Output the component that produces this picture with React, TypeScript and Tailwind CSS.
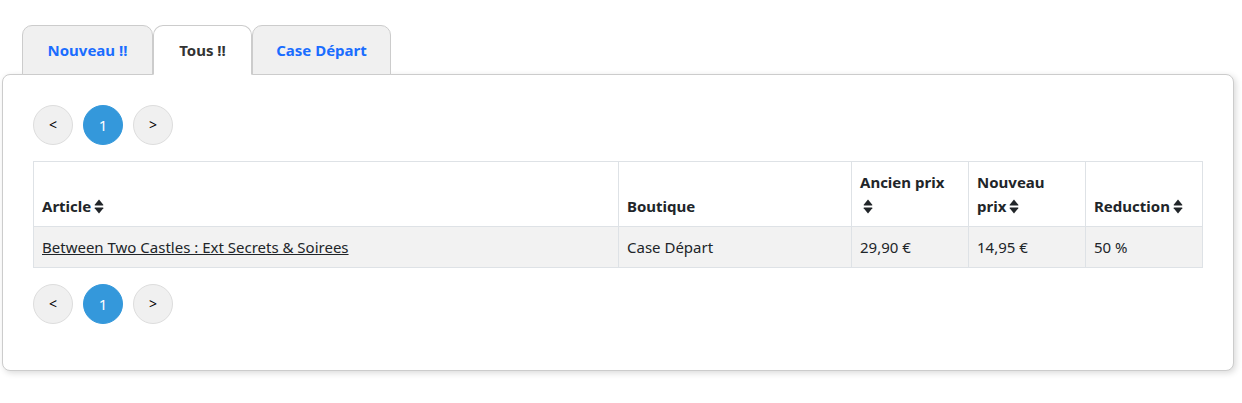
import React from "react";

function SortIcon() {
  return (
    <svg width="10" height="15" viewBox="0 0 10 16" className="inline-block align-[-2px] ml-[3px]" fill="#212529">
      <path d="M5 0.5 L9.6 6.2 Q10 7 9 7 L1 7 Q0 7 0.4 6.2 Z" />
      <path d="M5 15.5 L9.6 9.8 Q10 9 9 9 L1 9 Q0 9 0.4 9.8 Z" />
    </svg>
  );
}

function Pagination() {
  return (
    <div className="flex gap-[10px]">
      <button className="w-10 h-10 rounded-full bg-[#f0f0f0] border border-[#dddddd] text-[14px] text-black flex items-center justify-center">&lt;</button>
      <button className="w-10 h-10 rounded-full bg-[#3498db] border border-[#3498db] text-[15px] text-white flex items-center justify-center">1</button>
      <button className="w-10 h-10 rounded-full bg-[#f0f0f0] border border-[#dddddd] text-[14px] text-black flex items-center justify-center">&gt;</button>
    </div>
  );
}

export default function App() {
  const font = { fontFamily: '"Noto Sans", "Open Sans", sans-serif' };
  return (
    <div className="bg-white min-h-[403px] pt-[25px] pl-[2px] pr-[8px] text-[#212529] text-[16px] leading-[24px]" style={font}>
      <div className="flex pl-[20px] relative z-10 -mb-px">
        <div className="py-[12px] border border-[#cccccc] rounded-t-[10px] bg-[#f0f0f0] font-bold text-[#1a6dff] text-[15px] w-[131px] text-center whitespace-nowrap">Nouveau !!</div>
        <div className="py-[12px] border border-[#cccccc] border-b-white rounded-t-[10px] bg-white font-bold text-[#333333] text-[15px] w-[99px] text-center whitespace-nowrap">Tous !!</div>
        <div className="py-[12px] border border-[#cccccc] rounded-t-[10px] bg-[#f0f0f0] font-bold text-[#1a6dff] text-[15px] w-[139px] text-center whitespace-nowrap">Case Départ</div>
      </div>
      <div className="border border-[#cccccc] rounded-[8px] bg-white p-[30px] pb-[46px] shadow-[2px_2px_6px_rgba(0,0,0,0.15)]">
        <Pagination />
        <table className="table-fixed border-collapse w-[1169px] my-[16px] text-[15px]">
          <colgroup>
            <col className="w-[585px]" />
            <col className="w-[233px]" />
            <col className="w-[117px]" />
            <col className="w-[117px]" />
            <col className="w-[117px]" />
          </colgroup>
          <thead>
            <tr>
              <th className="border border-[#dee2e6] px-[8px] py-[8px] text-left align-bottom font-bold h-[65px]">Article<SortIcon /></th>
              <th className="border border-[#dee2e6] px-[8px] py-[8px] text-left align-bottom font-bold">Boutique</th>
              <th className="border border-[#dee2e6] px-[8px] py-[8px] text-left align-bottom font-bold">Ancien prix <SortIcon /></th>
              <th className="border border-[#dee2e6] px-[8px] py-[8px] text-left align-bottom font-bold">Nouveau prix<SortIcon /></th>
              <th className="border border-[#dee2e6] px-[8px] py-[8px] text-left align-bottom font-bold">Reduction<SortIcon /></th>
            </tr>
          </thead>
          <tbody>
            <tr className="bg-[#f2f2f2]">
              <td className="border border-[#dee2e6] px-[8px] py-[8px]"><a href="#" className="underline text-[#212529]">Between Two Castles : Ext Secrets &amp; Soirees</a></td>
              <td className="border border-[#dee2e6] px-[8px] py-[8px]">Case Départ</td>
              <td className="border border-[#dee2e6] px-[8px] py-[8px]">29,90 €</td>
              <td className="border border-[#dee2e6] px-[8px] py-[8px]">14,95 €</td>
              <td className="border border-[#dee2e6] px-[8px] py-[8px]">50 %</td>
            </tr>
          </tbody>
        </table>
        <Pagination />
      </div>
    </div>
  );
}
